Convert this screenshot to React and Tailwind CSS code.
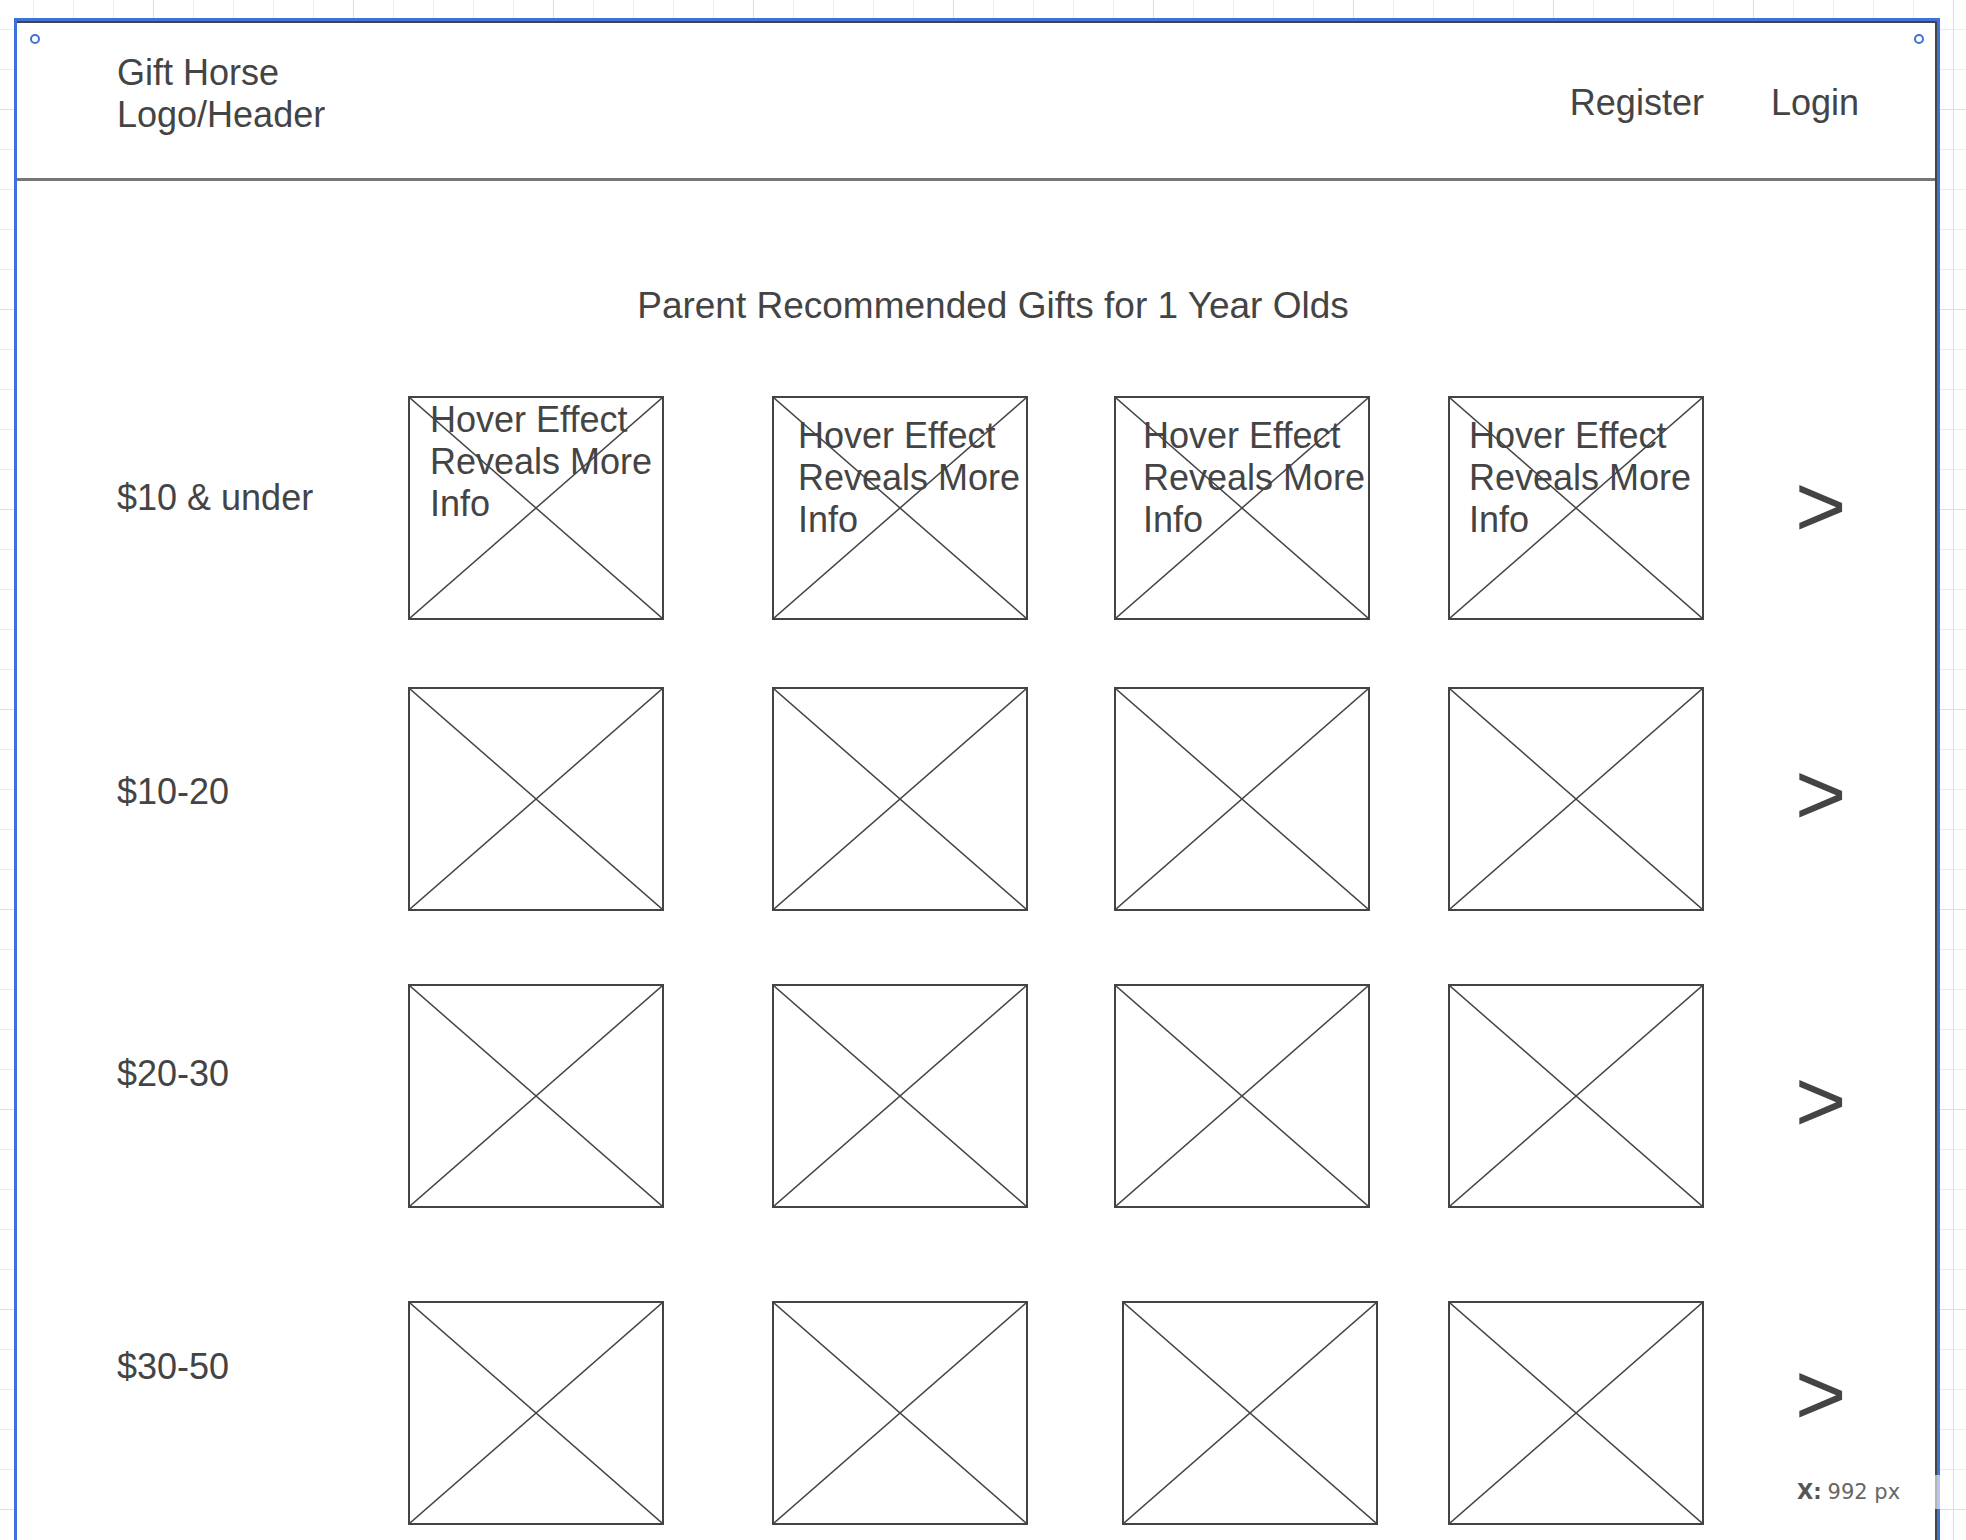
import React from 'react';

// price rows: label offset, chevron offset, gap above the row, box gaps
const rows = [
  { label: '$10 & under', mt: 'mt-[69px]', labelMt: 'mt-[81px]', chevMt: 'mt-[66px]', hover: true },
  { label: '$10-20', mt: 'mt-[67px]', labelMt: 'mt-[84px]', chevMt: 'mt-[63px]' },
  { label: '$20-30', mt: 'mt-[73px]', labelMt: 'mt-[69px]', chevMt: 'mt-[73px]' },
  { label: '$30-50', mt: 'mt-[93px]', labelMt: 'mt-[45px]', chevMt: 'mt-[49px]', shifted: true },
];

// text padding inside the hover boxes (first one sits higher)
const hoverPad = ['pt-[1px] pl-[20px]', 'pt-[17px] pl-[24px]', 'pt-[17px] pl-[27px]', 'pt-[17px] pl-[19px]'];

function Placeholder({ className, hoverClass }) {
  return (
    <div className={`relative h-[224px] w-[256px] shrink-0 border-2 border-[#444] bg-white ${className || ''}`}>
      <svg className="absolute inset-0 h-full w-full" viewBox="0 0 100 100" preserveAspectRatio="none">
        <line x1="0" y1="0" x2="100" y2="100" stroke="#444" strokeWidth="1.5" vectorEffect="non-scaling-stroke" />
        <line x1="100" y1="0" x2="0" y2="100" stroke="#444" strokeWidth="1.5" vectorEffect="non-scaling-stroke" />
      </svg>
      {hoverClass && (
        <div className={`relative whitespace-nowrap text-[36px] leading-[42px] text-[#444] ${hoverClass}`}>
          <div>Hover Effect</div>
          <div>Reveals More</div>
          <div>Info</div>
        </div>
      )}
    </div>
  );
}

function Row({ row }) {
  const gaps = row.shifted
    ? ['', 'ml-[108px]', 'ml-[94px]', 'ml-[70px]']
    : ['', 'ml-[108px]', 'ml-[86px]', 'ml-[78px]'];
  return (
    <div className={`flex items-start pl-[100px] ${row.mt}`}>
      <div className={`w-[291px] shrink-0 text-[36px] leading-[42px] text-[#444] ${row.labelMt}`}>{row.label}</div>
      {gaps.map((g, i) => (
        <Placeholder key={i} className={g} hoverClass={row.hover ? hoverPad[i] : null} />
      ))}
      <div className={`ml-[91px] text-[88px] leading-none text-[#444] ${row.chevMt}`}>&gt;</div>
    </div>
  );
}

export default function App() {
  return (
    <div className="relative h-[1540px] w-[1966px] overflow-hidden bg-white bg-[linear-gradient(to_right,#dedede_1px,transparent_1px),linear-gradient(to_bottom,#dedede_1px,transparent_1px),linear-gradient(to_right,#ececec_1px,transparent_1px),linear-gradient(to_bottom,#ececec_1px,transparent_1px)] bg-size-[200px_200px,200px_200px,40px_40px,40px_40px] bg-position-[153px_0,0_109px,33px_0,0_29px] font-['Liberation_Sans',Arial,sans-serif]">
      {/* wireframe page */}
      <div className="ml-[14px] mt-[18px] h-[1600px] w-[1926px] border-[3px] border-[#3f72d8] bg-white">
        <div className="h-full border-r-2 border-t-2 border-[#444]">
          <header className="flex h-[158px] items-start justify-between border-b-[3px] border-[#777]">
            <div className="pl-[100px] pt-[29px] text-[36px] leading-[42px] text-[#444]">
              <div>Gift Horse</div>
              <div>Logo/Header</div>
            </div>
            <nav className="flex gap-[67px] pr-[76px] pt-[59px] text-[36px] leading-[42px] text-[#444]">
              <span>Register</span>
              <span>Login</span>
            </nav>
          </header>

          <main className="flex flex-col">
            <h1 className="mt-[104px] pl-[34px] text-center text-[37px] font-normal leading-[42px] text-[#444]">
              Parent Recommended Gifts for 1 Year Olds
            </h1>
            {rows.map((r) => (
              <Row key={r.label} row={r} />
            ))}
          </main>
        </div>
      </div>

      {/* selection handles */}
      <div className="absolute left-[30px] top-[34px] h-[10px] w-[10px] rounded-full border-2 border-[#3f72d8] bg-white" />
      <div className="absolute left-[1914px] top-[34px] h-[10px] w-[10px] rounded-full border-2 border-[#3f72d8] bg-white" />

      {/* cursor readout */}
      <div className="absolute left-[1780px] top-[1475px] flex h-[34px] w-[173px] items-center bg-white/60 pl-[17px] font-['DejaVu_Sans',sans-serif] text-[21px] leading-[34px]">
        <span className="font-bold text-[#555]">X:</span>
        <span className="ml-[6px] text-[#666]">992 px</span>
      </div>
    </div>
  );
}
